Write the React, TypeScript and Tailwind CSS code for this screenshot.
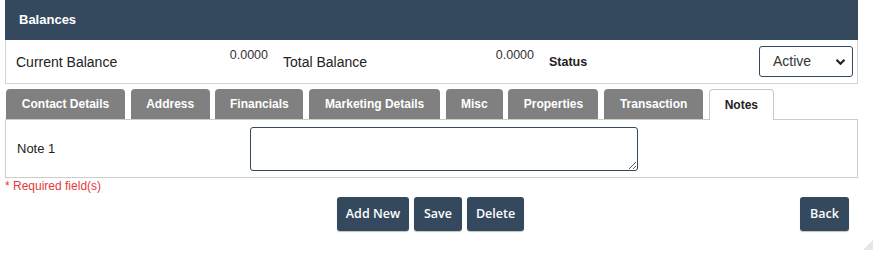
const tabs = [
  { label: 'Contact Details', w: 'w-[119px]' },
  { label: 'Address', w: 'w-[79px]' },
  { label: 'Financials', w: 'w-[88px]' },
  { label: 'Marketing Details', w: 'w-[131px]' },
  { label: 'Misc', w: 'w-[57px]' },
  { label: 'Properties', w: 'w-[90px]' },
  { label: 'Transaction', w: 'w-[99px]' },
];

const btn =
  'h-[34px] rounded-[3px] bg-[#34495e] text-[12.5px] font-semibold text-white shadow-[0_1px_1px_rgba(0,0,0,0.25)]';

export default function App() {
  return (
    <div className="relative h-[254px] w-[877px] overflow-hidden bg-white font-['Liberation_Sans',Arial,sans-serif] text-[#222]">
      <div className="w-[853px] pl-[5px] box-content">
        {/* header */}
        <div className="flex h-[40px] items-center bg-[#34495e] pl-[14px] text-[13px] font-bold text-white">
          Balances
        </div>

        {/* balances row */}
        <div className="flex h-[44px] border-x border-b border-[#d4d4d4]">
          <div className="flex w-[212px] items-center pl-[10px] pt-[2px] text-[14px]">Current Balance</div>
          <div className="w-[55px] pr-[5px] pt-[6px] text-right text-[12.5px] text-[#333]">0.0000</div>
          <div className="flex w-[217px] items-center pl-[10px] pt-[2px] text-[14px]">Total Balance</div>
          <div className="w-[49px] pr-[5px] pt-[6px] text-right text-[12.5px] text-[#333]">0.0000</div>
          <div className="flex flex-1 items-center pl-[10px] pt-[2px] text-[12.5px] font-bold">Status</div>
          <div className="flex items-center pr-[4px]">
            <div className="flex h-[31px] w-[94px] items-center justify-between rounded-[3px] border border-[#34495e] pl-[13px] pr-[6px] text-[14px] text-[#333]">
              <span>Active</span>
              <svg width="11" height="8" viewBox="0 0 11 8" fill="none">
                <path d="M1.5 1.8 5.5 5.8 9.5 1.8" stroke="#222" strokeWidth="2.2" />
              </svg>
            </div>
          </div>
        </div>

        {/* tabs */}
        <div className="mt-[5px] flex items-end pl-[1px]">
          {tabs.map((t) => (
            <div
              key={t.label}
              className={`${t.w} mr-[5.7px] flex h-[30px] items-center justify-center rounded-t-[4px] bg-[#808080] text-[12px] font-bold text-white`}
            >
              {t.label}
            </div>
          ))}
          <div className="relative -mb-px flex h-[31px] w-[65px] items-center justify-center rounded-t-[4px] border border-b-0 border-[#c8c8c8] bg-white text-[12px] font-bold text-[#222]">
            Notes
          </div>
        </div>

        {/* notes box */}
        <div className="flex h-[59px] items-center border border-[#cccccc]">
          <div className="w-[244px] pl-[11px] text-[13px] text-[#222]">Note 1</div>
          <textarea className="h-[44px] w-[388px] resize-y rounded-[3px] border border-[#34495e] bg-white outline-none" />
        </div>

        <div className="mt-[2px] text-[12px] leading-[13px] text-[#e5393b]">* Required field(s)</div>

        {/* buttons */}
        <div className="mt-[4px] flex items-center font-['Open_Sans',sans-serif]">
          <div className="ml-[332px] flex gap-[5px]">
            <button className={`${btn} w-[72px]`}>Add New</button>
            <button className={`${btn} w-[48px]`}>Save</button>
            <button className={`${btn} w-[57px]`}>Delete</button>
          </div>
          <button className={`${btn} ml-auto mr-[9px] w-[49px]`}>Back</button>
        </div>
      </div>

      {/* window resize grip */}
      <svg className="absolute bottom-[4px] right-[4px]" width="10" height="10" viewBox="0 0 10 10">
        <path d="M10 0 L10 10 L0 10 Z" fill="#e6e6e6" />
      </svg>
    </div>
  );
}
